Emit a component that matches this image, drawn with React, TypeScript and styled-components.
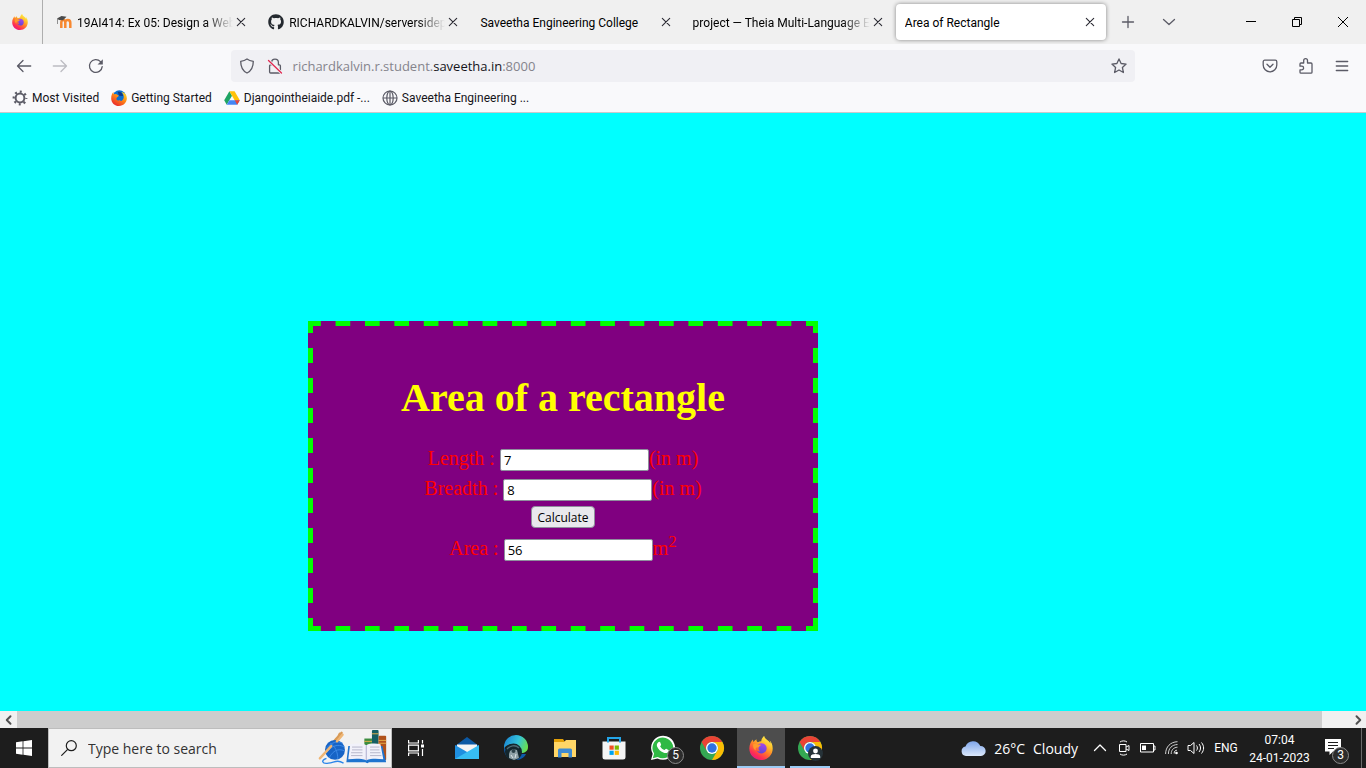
import React from "react";
import styled, { createGlobalStyle } from "styled-components";
import { FaGithub, FaWhatsapp } from "react-icons/fa";

const ui = `"Segoe UI", "Open Sans", "Noto Sans", sans-serif`;
const compact = `Roboto, "Open Sans", sans-serif`;

const GlobalStyle = createGlobalStyle`
  *, *::before, *::after { box-sizing: border-box; }
  body { margin: 0; font-family: ${compact}; font-size: 12px; color: #15141a; }
  button { font: inherit; color: inherit; border: 0; padding: 0; background: none; }
  a { color: inherit; text-decoration: none; }
  svg { display: block; flex: none; }
`;

/* ---------- window and tab strip ---------- */

const Desktop = styled.div`
  display: flex;
  flex-direction: column;
  min-height: 100vh;
`;

const TabStrip = styled.header`
  display: flex;
  align-items: stretch;
  height: 44px;
  background: #f0f0f0;
`;

const PinnedTab = styled.button`
  display: flex;
  align-items: center;
  justify-content: center;
  width: 43px;
  padding-right: 2px;
  border-right: 1px solid #aeaeae;
`;

const Tabs = styled.div`
  display: flex;
  flex: 0 1 1061px;
  min-width: 0;
  margin-left: 3px;
`;

const Tab = styled.div<{ $active?: boolean }>`
  display: flex;
  flex: 1 1 0;
  min-width: 0;
  align-items: center;
  margin: 4px 1px;
  padding: 0 4px 0 9px;
  border-radius: 4px;
  background: ${(p) => (p.$active ? "#fff" : "transparent")};
  box-shadow: ${(p) => (p.$active ? "0 0 4px rgba(0, 0, 0, 0.45)" : "none")};
`;

const TabIcon = styled.span`
  width: 16px;
  margin-right: 5px;
`;

const TabTitle = styled.button<{ $fade?: boolean }>`
  flex: 1;
  min-width: 0;
  overflow: hidden;
  padding-top: 2px;
  text-align: left;
  white-space: nowrap;
  line-height: 20px;
  color: #000;
  mask-image: ${(p) => (p.$fade ? "linear-gradient(to left, transparent, #000 28px)" : "none")};
`;

const TabClose = styled.button`
  display: flex;
  align-items: center;
  justify-content: center;
  width: 24px;
  height: 24px;
  margin-left: -4px;
`;

const StripButton = styled.button`
  display: flex;
  align-items: center;
  justify-content: center;
  width: 41px;
`;

const WindowButtons = styled.div`
  display: flex;
  margin-left: auto;
`;

const WindowButton = styled.button`
  display: flex;
  align-items: center;
  justify-content: center;
  width: 46px;
`;

/* ---------- navigation and bookmarks ---------- */

const NavBar = styled.nav`
  display: flex;
  align-items: center;
  height: 40px;
  padding: 4px 6px 0;
  background: #f9f9fb;
`;

const ToolButton = styled.button`
  display: flex;
  align-items: center;
  justify-content: center;
  width: 36px;
  height: 32px;
`;

const Spring = styled.div`
  flex: 117 1 0;
`;

const UrlBar = styled.div`
  display: flex;
  flex: 904 1 0;
  align-items: center;
  height: 32px;
  padding: 0 2px;
  border-radius: 4px;
  background: #f0f0f4;
`;

const UrlButton = styled.button`
  display: flex;
  align-items: center;
  justify-content: center;
  width: 28px;
  height: 28px;
`;

const Url = styled.div`
  flex: 1;
  padding-left: 4px;
  font-family: ${ui};
  font-size: 13px;
  line-height: 20px;
  white-space: nowrap;
  color: #85848c;
`;

const Host = styled.span`
  color: #15141a;
`;

const Bookmarks = styled.div`
  display: flex;
  align-items: center;
  gap: 12px;
  height: 29px;
  padding: 0 12px;
  background: #f9f9fb;
  border-bottom: 1px solid #c9c9cc;
`;

const Bookmark = styled.a`
  display: flex;
  align-items: center;
  gap: 4px;
  line-height: 20px;
  white-space: nowrap;
`;

/* ---------- web page ---------- */

const Page = styled.main`
  flex: 1;
  padding: 208px 0 80px 308px;
  background: cyan;
`;

const dashX = "linear-gradient(90deg, lime 25%, transparent 25% 75%, lime 75%)";
const dashY = "linear-gradient(lime 25%, transparent 25% 75%, lime 75%)";

const Box = styled.form`
  width: 510px;
  height: 310px;
  padding-top: 49px;
  border: 5px solid transparent;
  background-color: purple;
  background-image: ${dashX}, ${dashX}, ${dashY}, ${dashY};
  background-size: 29px 5px, 29px 5px, 5px 30px, 5px 30px;
  background-position: 0 -5px, 0 calc(100% + 5px), -5px 0, calc(100% + 5px) 0;
  background-repeat: round no-repeat, round no-repeat, no-repeat round, no-repeat round;
  background-origin: padding-box;
  background-clip: border-box;
  font-family: "Liberation Serif", "Times New Roman", serif;
  font-size: 20px;
  color: red;
`;

const Title = styled.h1`
  margin: 0 0 24px;
  font-size: 40px;
  line-height: 46px;
  text-align: center;
  color: yellow;
`;

const Row = styled.div`
  display: flex;
  align-items: baseline;
  justify-content: center;
  height: 30px;
  line-height: 26px;
  white-space: pre;
`;

const Field = styled.input`
  width: 149px;
  height: 22px;
  padding: 1px 3px;
  border: 1px solid #8f8f9d;
  border-radius: 2px;
  background: #fff;
  font-family: ${ui};
  font-size: 13px;
  color: #000;
`;

const Calculate = styled.button`
  height: 22px;
  padding: 1px 5px 0;
  border: 1px solid #8f8f9d;
  border-radius: 4px;
  background: #e9e9ed;
  font-family: ${ui};
  font-size: 12px;
  line-height: 20px;
  color: #000;
`;

const ButtonRow = styled(Row)`
  align-items: flex-start;
  padding-top: 1px;
`;

const Sup = styled.sup`
  font-size: 17px;
  line-height: 0;
`;

const ScrollBar = styled.div`
  display: flex;
  height: 17px;
  background: #f0f0f0;
`;

const ScrollButton = styled.button`
  display: flex;
  align-items: center;
  justify-content: center;
  width: 17px;
`;

const ScrollTrack = styled.div`
  flex: 1;
`;

const ScrollThumb = styled.div`
  width: 98%;
  height: 17px;
  background: #cdcdcd;
`;

/* ---------- taskbar ---------- */

const TaskBar = styled.footer`
  display: flex;
  height: 40px;
  background: #1d1d1d;
  color: #fff;
`;

const StartButton = styled.button`
  display: flex;
  align-items: center;
  justify-content: center;
  width: 48px;
`;

const Search = styled.label`
  display: flex;
  align-items: center;
  width: 344px;
  padding: 0 2px 0 12px;
  border: 1px solid #bdbdbd;
  background: #f2f2f2;
`;

const SearchInput = styled.input`
  flex: 1;
  min-width: 0;
  padding: 0 0 0 11px;
  border: 0;
  outline: 0;
  background: none;
  font-family: ${ui};
  font-size: 14px;
  color: #333;
  &::placeholder { color: #333; opacity: 1; }
`;

const Apps = styled.div`
  display: flex;
  gap: 1px;
  margin-left: 3px;
`;

const AppButton = styled.button<{ $active?: boolean; $open?: boolean }>`
  position: relative;
  display: flex;
  align-items: center;
  justify-content: center;
  width: 48px;
  background: ${(p) => (p.$active ? "#4d4d4d" : "transparent")};
  &::after {
    content: "";
    display: ${(p) => (p.$active || p.$open ? "block" : "none")};
    position: absolute;
    bottom: 0;
    left: ${(p) => (p.$active ? "0" : "4px")};
    right: ${(p) => (p.$active ? "0" : "4px")};
    height: 2px;
    background: #9ccbf5;
  }
`;

const Badge = styled.span<{ $right: number }>`
  position: absolute;
  right: ${(p) => p.$right}px;
  bottom: 4px;
  width: 17px;
  height: 17px;
  border: 1px solid #8a8a8a;
  border-radius: 50%;
  background: #2c2c2c;
  font-size: 12px;
  line-height: 15px;
  text-align: center;
  color: #fff;
`;

const Tray = styled.div`
  display: flex;
  margin-left: auto;
`;

const Weather = styled.button`
  display: flex;
  align-items: center;
  gap: 8px;
  margin-right: 10px;
  font-family: ${ui};
  font-size: 14px;
  white-space: nowrap;
`;

const TrayButton = styled.button`
  display: flex;
  align-items: center;
  justify-content: center;
  width: 24px;
`;

const Language = styled.button`
  width: 36px;
`;

const Clock = styled.button`
  width: 71px;
  padding-top: 2px;
  line-height: 18px;
  text-align: center;
`;

const Notifications = styled.button`
  position: relative;
  width: 46px;
  padding: 0 0 2px 10px;
`;

const ShowDesktop = styled.button`
  width: 5px;
  border-left: 1px solid #6a6a6a;
`;

/* ---------- icons ---------- */

const Line = ({ d, size = 16, color = "#5b5b66", w = 1.3 }: { d: string; size?: number; color?: string; w?: number }) => (
  <svg width={size} height={size} viewBox="0 0 16 16" fill="none" stroke={color} strokeWidth={w} strokeLinecap="round" strokeLinejoin="round">
    <path d={d} />
  </svg>
);

const Cross = () => <Line d="M4.3 4.3l7.4 7.4M11.7 4.3l-7.4 7.4" color="#2b2a33" w={1.1} />;

const Firefox = ({ size = 16, id }: { size?: number; id: string }) => (
  <svg width={size} height={size} viewBox="0 0 24 24">
    <defs>
      <linearGradient id={`${id}a`} x1="0.85" y1="0.05" x2="0.25" y2="1">
        <stop offset="0" stopColor="#fff44f" />
        <stop offset="0.3" stopColor="#ffc02a" />
        <stop offset="0.55" stopColor="#ff7a2a" />
        <stop offset="0.8" stopColor="#ff2f52" />
        <stop offset="1" stopColor="#e31587" />
      </linearGradient>
      <linearGradient id={`${id}b`} x1="0.6" y1="0" x2="0.3" y2="1">
        <stop offset="0" stopColor="#a648e8" />
        <stop offset="1" stopColor="#5b45d6" />
      </linearGradient>
    </defs>
    <path fill={`url(#${id}a)`} d="M15.2 0c-2.2 1.4-2.9 3.5-2.9 5.2-1.2 0-2.4.3-3.4 1C7.5 5.6 7.3 4.200 7.600 3.200 6.200 3.900 5.200 4.900 4.500 5.900 4 5.300 4 3.900 4 3.500 2.200 5.100.300 8.500.300 12.600.300 19 5.500 24 12 24s11.700-5 11.700-11.600c0-3.600-1.400-6.600-3.200-8.100.7 1.200.9 2.300.9 3.100C19.700 4 16 3.600 15.200 0z" />
    <path fill={`url(#${id}b)`} d="M12 7.200c-2.600.2-4.500 2.200-4.700 4.300.7-.5 1.700-.5 2.400-.1-.6 1.700.3 3.300 1.900 3.900-1.400.3-2.700 0-3.700-.9.900 1.900 2.600 3 4.600 3 3 0 5.200-2.300 5.200-5.100 0-2.900-2.300-5.300-5.700-5.100z" />
    <path fill="#ff9b2b" d="M4.200 8.200c1.800-.8 3.500-.6 4.600.2l3.200.4c-.1 1.200-2.100 1.500-2.500 2.600-2.300-.5-3.400.9-2.600 3-2-.7-3.200-3.400-2.700-6.200z" />
  </svg>
);

const OldFirefox = () => (
  <svg width="16" height="16" viewBox="0 0 24 24">
    <defs>
      <linearGradient id="ofa" x1="0.9" y1="0" x2="0.2" y2="1">
        <stop offset="0" stopColor="#ffe226" />
        <stop offset="0.45" stopColor="#ff8a16" />
        <stop offset="1" stopColor="#e8202f" />
      </linearGradient>
    </defs>
    <circle cx="12.500" cy="10.500" r="10" fill="#0b70d1" />
    <path fill="url(#ofa)" d="M3.500 3 4 6.500 7.600 6l4.400 2.700-3.500 2.800c-1.500 3.500 1.500 5 5.500 3.500-1.500 3 6 1.500 5-6-.5-3.200-2.200-5-3.500-6 5.500.5 8.300 5 8.300 9.500C23.800 19 18.500 24 12 24S.300 19 .300 12.600C.300 8 1.500 5.500 3.500 3z" />
    <path fill="#123a86" d="M10 2.500c4.500-.500 8 2.500 8 6.500l-6-.5z" />
  </svg>
);

const Moodle = () => (
  <svg width="17" height="16" viewBox="0 0 17 16">
    <path fill="none" stroke="#f7882f" strokeWidth="2.500" d="M5.300 14V8.500c0-3.500 4-3.500 4 0V14M9.300 14V8.500c0-3.500 5-3.500 5 .2V14" />
    <path fill="#4a4a4a" d="M1 4.500 5.500 2l5 .7L7 6.200 3 6z" />
    <path stroke="#8f8f8f" fill="none" d="M1.500 5v5" />
  </svg>
);

const Drive = () => (
  <svg width="16" height="16" viewBox="0 0 16 16">
    <path fill="#1fa463" d="M5.400 1.200 8 5.700 2.700 14.800.2 10.300z" />
    <path fill="#ffc107" d="M5.400 1.200h5.200l5.200 9.100h-5.200z" />
    <path fill="#4285f4" d="M5.300 10.300h10.500l-2.600 4.500H2.700z" />
    <path fill="#ea4335" d="M10.700 10.300h5.100l-2.600 4.500z" />
  </svg>
);

const Gear = () => (
  <svg width="16" height="16" viewBox="0 0 16 16" fill="none" stroke="#5b5b66">
    <circle cx="8" cy="8" r="4.400" strokeWidth="2" />
    <circle cx="8" cy="8" r="6.300" strokeWidth="2.200" strokeDasharray="2 2.948" strokeDashoffset="1" />
  </svg>
);

const Globe = () => (
  <svg width="16" height="16" viewBox="0 0 16 16" fill="none" stroke="#5b5b66" strokeWidth="1.200">
    <circle cx="8" cy="8" r="7" />
    <ellipse cx="8" cy="8" rx="3.200" ry="7" />
    <path d="M1 8h14M8 1v14" />
  </svg>
);

const Reload = () => (
  <svg width="16" height="16" viewBox="0 0 16 16" fill="none" stroke="#5b5b66" strokeWidth="1.300" strokeLinecap="round">
    <path d="M14.200 8.600A6.400 6.400 0 1 1 12.500 3.600" />
    <path d="M14.800 1.200v5.200H9.600z" fill="#5b5b66" stroke="none" />
  </svg>
);

const LockOff = () => (
  <svg width="16" height="16" viewBox="0 0 16 16" fill="none" stroke="#5b5b66" strokeWidth="1.300" strokeLinecap="round" strokeLinejoin="round">
    <path d="M4.600 6.800V4.500a3.400 3.400 0 0 1 6.800 0v2.300h1a1 1 0 0 1 1 1V14a1 1 0 0 1-1 1H3.600a1 1 0 0 1-1-1V7.800a1 1 0 0 1 1-1z" />
    <path d="M1.500 2.500l13 12.500" stroke="#f0f0f4" strokeWidth="3" />
    <path d="M1.500 2.500l13 12.500" stroke="#e22850" />
  </svg>
);

const Chrome = ({ person }: { person?: boolean }) => (
  <svg width="26" height="26" viewBox="0 0 26 26">
    <circle cx="13" cy="13" r="12" fill="#34a853" />
    <path fill="#ea4335" d="M2.600 7a12 12 0 0 1 20.800 0H13a6 6 0 0 0-5.200 9z" />
    <path fill="#fbbc04" d="M23.400 7A12 12 0 0 1 13 25l5.200-9A6 6 0 0 0 13 7z" />
    <circle cx="13" cy="13" r="6" fill="#fff" />
    <circle cx="13" cy="13" r="4.700" fill="#2f72e2" />
    {person && (
      <g>
        <circle cx="18.500" cy="18.500" r="7.500" fill="#263238" />
        <circle cx="18.500" cy="16" r="2.400" fill="#fff" />
        <path fill="#fff" d="M13.800 23v-1.500c0-3.200 9.400-3.200 9.400 0V23z" />
      </g>
    )}
  </svg>
);

const Windows = () => (
  <svg width="16" height="16" viewBox="0 0 16 16" fill="#fff">
    <path d="M0 2.200 6.600 1.300v6.300H0zM7.400 1.200 16 0v7.600H7.400zM0 8.400h6.600v6.300L0 13.800zM7.400 8.400H16V16l-8.600-1.200z" />
  </svg>
);

const SearchArt = () => (
  <svg width="72" height="36" viewBox="0 0 72 38">
    <path d="M8 21 24 3M12 24 22 4" stroke="#d99a55" strokeWidth="2.500" strokeLinecap="round" />
    <circle cx="17" cy="21" r="10.500" fill="#1764c6" />
    <path d="M8 19c6-6 11-8 17-5M8 24c5-7 12-10 19-6M11 29c4-7 9-10 16-7M12 14c5 3 8 9 8 17" stroke="#3d8be8" fill="none" />
    <path d="M1 30 13 17M19 12 25 5" stroke="#efb675" strokeWidth="2.500" strokeLinecap="round" />
    <path d="M8 30c-6 2-5 6 2 5s9-4 16 0" stroke="#2b86ea" strokeWidth="1.500" fill="none" />
    <rect x="48" y="9" width="8" height="18" fill="#3c8d40" />
    <rect x="56" y="0" width="7" height="27" rx="1" fill="#155e63" />
    <rect x="63" y="6" width="8" height="26" rx="1" fill="#b0521c" />
    <path d="M48 12h8M56 4h7M63 11h8M63 14h8" stroke="#e8b04a" />
    <path d="M31 17h36l4 17H53l-2 1-2-1H29z" fill="#1f74cf" />
    <path d="M33 15c6-1 13-1 17 1 4-2 10-2 15-1l3 16c-7-1-13-1-18 1-5-2-12-2-19-1z" fill="#f1f1fa" />
    <path d="M50 16v16" stroke="#a9a9cc" />
    <path d="M35 18h11M35 21h11M34 24h12M34 27h12M54 18h10M54 21h10M54 24h11M54 27h12" stroke="#b4b4c8" />
  </svg>
);

const TaskView = () => (
  <svg width="18" height="16" viewBox="0 0 18 16" fill="none" stroke="#fff" strokeWidth="1.200">
    <path d="M1.600 0v3h9.800V0M1.600 16v-3h9.800v3M1.600 5.100h9.800v5.800H1.600zM15.500 0v3.500M15.500 9v7" />
    <path d="M14 4.500h3v3h-3z" fill="#fff" stroke="none" />
  </svg>
);

const Mail = () => (
  <svg width="24" height="24" viewBox="0 0 24 24">
    <path fill="#0c59a4" d="M0 10 12 1l12 9v5H0z" />
    <path fill="#f4f4f4" d="M2 8.500h20v7L12 19 2 15z" />
    <path fill="#1f8fe0" d="M0 9l13 7.500V23H0z" />
    <path fill="#37bdf3" d="M24 9 0 23h24z" />
  </svg>
);

const Edge = () => (
  <svg width="26" height="26" viewBox="0 0 26 26">
    <defs>
      <linearGradient id="edg" x1="0" y1="0.300" x2="1" y2="0.600">
        <stop offset="0" stopColor="#1b87d4" />
        <stop offset="0.550" stopColor="#34c3da" />
        <stop offset="1" stopColor="#6ae04a" />
      </linearGradient>
    </defs>
    <path fill="#0d5aab" d="M1 13c0 8 5 12 11 12 5 0 9-2 11-6H9z" />
    <path fill="url(#edg)" d="M1 12A12 12 0 0 1 25 12c0 4-3 6-7 6-3 0-4-1-3-3 1-3-2-6-6-6-4 0-7 2-8 5z" />
    <circle cx="10.500" cy="17" r="8.500" fill="#14262d" />
    <path d="M4 14c3-3 8-5 12-1" stroke="#4e6a74" strokeWidth="1.500" fill="none" />
    <path fill="#8fa0a6" d="M7 16l3-2 4 1 1 4 1 4-5 2-5-2 0-4z" />
    <circle cx="10.500" cy="16" r="2" fill="#2c4048" />
    <path stroke="#dfe6e8" d="M8 20l2 3M13 19l-1 4" />
  </svg>
);

const Folder = () => (
  <svg width="24" height="22" viewBox="0 0 24 22">
    <path fill="#e3a008" d="M1 2h9l2 3H1z" />
    <path fill="#ffd667" d="M1 5h10l2-2h10v17H1z" />
    <path fill="#3f8bd2" d="M5 13a1.500 1.500 0 0 1 1.500-1.500h11A1.500 1.500 0 0 1 19 13v7.500h-3.500V16h-7v4.500H5z" />
  </svg>
);

const Store = () => (
  <svg width="24" height="24" viewBox="0 0 24 24">
    <path fill="#f5f5f5" d="M.5 5.500h23V21a2.500 2.500 0 0 1-2.500 2.500H3A2.500 2.500 0 0 1 .5 21z" />
    <path d="M6 6.500V2h12v4.500" fill="none" stroke="#24a5e8" strokeWidth="2" />
    <path fill="#f25022" d="M7.500 9.500h4.200v4.200H7.500z" />
    <path fill="#7fba00" d="M12.700 9.500h4.200v4.200h-4.200z" />
    <path fill="#00a4ef" d="M7.500 14.700h4.200v4.200H7.500z" />
    <path fill="#ffb900" d="M12.700 14.700h4.200v4.200h-4.200z" />
  </svg>
);

const WhatsApp = () => (
  <svg width="26" height="26" viewBox="0 0 26 26">
    <path fill="#fff" d="M1 25l1.700-6.200A12 12 0 1 1 7.500 23.400z" />
    <path fill="#2fb944" d="M2.800 23.300l1.300-4.700A10.400 10.400 0 1 1 7.700 22z" />
    <path fill="#fff" d="M8.300 7.200c.5-.6 1.500-.7 1.900.1l.9 2.100c.2.500-.7 1.400-1 1.800 1.100 2 2.500 3.100 4.500 3.900.5-.4 1-1.500 1.600-1.300l2.200 1.100c.6.300.2 1.500-.1 2-1.100 1.400-3 1.500-5 .7-2.800-1.100-5-3.300-6.100-5.800-.7-1.800-.3-3.500 1.100-4.600z" />
  </svg>
);

const Cloud = () => (
  <svg width="25" height="18" viewBox="0 0 25 18">
    <defs>
      <linearGradient id="cld" x1="0" y1="0" x2="0" y2="1">
        <stop offset="0" stopColor="#7fa6ea" />
        <stop offset="1" stopColor="#dbe8fb" />
      </linearGradient>
    </defs>
    <path fill="url(#cld)" d="M5 17a4.800 4.800 0 0 1-.5-9.500A8 8 0 0 1 19.300 7 5 5 0 0 1 20 17z" />
  </svg>
);

const Camera = () => (
  <svg width="12" height="16" viewBox="0 0 12 16" fill="none" stroke="#fff">
    <path d="M1.500 4.500h6.500v7H1.500zM8 7l3-1.500v5L8 9M2 2c2-1.500 5-1.500 7 0M2 14c2 1.500 5 1.500 7 0" />
  </svg>
);

const Battery = () => (
  <svg width="16" height="10" viewBox="0 0 16 10" fill="none" stroke="#fff">
    <path d="M.5.500h13v8.500H.5zM13.500 3h1.500v4h-1.500" />
    <path d="M2 2.500h4v4.500H2z" fill="#fff" stroke="none" />
  </svg>
);

const Wifi = () => (
  <svg width="14" height="14" viewBox="0 0 14 14" fill="none" stroke="#fff" strokeWidth="1">
    <path d="M9.200 12.500c0-1.800.6-3 2.600-3.300" />
    <path d="M6.200 13c0-4 2.300-6.600 6.300-6.800M3.400 13c0-5.700 3.600-9.300 9.100-9.500M.6 13C.6 5.800 5.500.9 12.500.7" stroke="#d0d0d0" />
    <circle cx="11.500" cy="12" r="1.300" fill="#fff" stroke="none" />
  </svg>
);

const Speaker = () => (
  <svg width="18" height="14" viewBox="0 0 18 14" fill="none" stroke="#fff">
    <path d="M1 4.500h2.500L7 1.500v11L3.500 9.500H1zM9.500 4.500c1.200 1.500 1.200 3.500 0 5M12 3c2 2.500 2 5.500 0 8M14.500 1.500c2.800 3.500 2.800 7.500 0 11" />
  </svg>
);

const tabs = [
  { title: "19AI414: Ex 05: Design a Webs", icon: <Moodle />, fade: true },
  { title: "RICHARDKALVIN/serversidepr", icon: <FaGithub size={16} color="#24292f" />, fade: true },
  { title: "Saveetha Engineering College" },
  { title: "project — Theia Multi-Language E", fade: true },
  { title: "Area of Rectangle", active: true },
];

export default function App() {
  return (
    <Desktop>
      <GlobalStyle />
      <TabStrip>
        <PinnedTab aria-label="Pinned tab"><Firefox id="pin" /></PinnedTab>
        <Tabs>
          {tabs.map((t) => (
            <Tab key={t.title} $active={t.active}>
              {t.icon && <TabIcon>{t.icon}</TabIcon>}
              <TabTitle $fade={t.fade}>{t.title}</TabTitle>
              <TabClose aria-label="Close tab"><Cross /></TabClose>
            </Tab>
          ))}
        </Tabs>
        <StripButton aria-label="New tab"><Line d="M8 2.500v11M2.500 8h11" /></StripButton>
        <StripButton aria-label="List all tabs"><Line d="M2.500 5.500 8 10.500l5.500-5" /></StripButton>
        <WindowButtons>
          <WindowButton aria-label="Minimize">
            <svg width="10" height="10" viewBox="0 0 10 10"><path d="M0 4.500h10" stroke="#000" /></svg>
          </WindowButton>
          <WindowButton aria-label="Restore">
            <svg width="10" height="10" viewBox="0 0 10 10" fill="none" stroke="#000"><path d="M.5 2.500h7v7h-7zM2.500 2.500v-2h7v7h-2" /></svg>
          </WindowButton>
          <WindowButton aria-label="Close">
            <svg width="10" height="10" viewBox="0 0 10 10" stroke="#000"><path d="M0 0l10 10M10 0 0 10" /></svg>
          </WindowButton>
        </WindowButtons>
      </TabStrip>

      <NavBar>
        <ToolButton aria-label="Back"><Line d="M14.700 8H1.500M7 2.500 1.500 8 7 13.500" /></ToolButton>
        <ToolButton aria-label="Forward"><Line d="M1.300 8h13.200M9 2.500 14.500 8 9 13.500" color="#bcbcc2" /></ToolButton>
        <ToolButton aria-label="Reload"><Reload /></ToolButton>
        <Spring />
        <UrlBar>
          <UrlButton aria-label="Tracking protection"><Line d="M8 1c2 1.500 4 2 6.300 2.300 0 5.200-.8 9.200-6.300 11.700C2.500 12.500 1.700 8.500 1.700 3.300 4 3 6 2.500 8 1z" /></UrlButton>
          <UrlButton aria-label="Connection not secure"><LockOff /></UrlButton>
          <Url>richardkalvin.r.student.<Host>saveetha.in</Host>:8000</Url>
          <UrlButton aria-label="Bookmark this page"><Line d="M8 .9l2.100 4.600 5 .6-3.700 3.400 1 5L8 12l-4.400 2.500 1-5L.9 6.100l5-.6z" /></UrlButton>
        </UrlBar>
        <Spring />
        <ToolButton aria-label="Save to Pocket"><Line d="M2.700 2.200h10.600a1.500 1.500 0 0 1 1.500 1.500V7a6.800 6.800 0 0 1-13.600 0V3.700a1.500 1.500 0 0 1 1.500-1.500zM5 6.300l3 2.900 3-2.900" /></ToolButton>
        <ToolButton aria-label="Extensions"><Line d="M2 8.200V6a1 1 0 0 1 1-1h2.700V2.600a1.900 1.900 0 0 1 3.800 0V5H13a1 1 0 0 1 1 1v8.200a1 1 0 0 1-1 1H3a1 1 0 0 1-1-1v-2.400h1.800a1.800 1.800 0 0 0 0-3.600z" /></ToolButton>
        <ToolButton aria-label="Menu"><Line d="M2.300 3.500h11.400M2.300 8h11.400M2.300 12.500h11.400" /></ToolButton>
      </NavBar>

      <Bookmarks>
        <Bookmark href="#most-visited"><Gear />Most Visited</Bookmark>
        <Bookmark href="#getting-started"><OldFirefox />Getting Started</Bookmark>
        <Bookmark href="#drive"><Drive />Djangointheiaide.pdf -...</Bookmark>
        <Bookmark href="#saveetha"><Globe />Saveetha Engineering ...</Bookmark>
      </Bookmarks>

      <Page>
        <Box onSubmit={(e) => e.preventDefault()}>
          <Title>Area of a rectangle</Title>
          <Row><label htmlFor="length">{"Length : "}</label><Field id="length" defaultValue="7" />(in m)</Row>
          <Row><label htmlFor="breadth">{"Breadth : "}</label><Field id="breadth" defaultValue="8" />(in m)</Row>
          <ButtonRow><Calculate type="submit">Calculate</Calculate></ButtonRow>
          <Row><label htmlFor="area">{"Area : "}</label><Field id="area" defaultValue="56" /><span>m<Sup>2</Sup></span></Row>
        </Box>
      </Page>
      <ScrollBar>
        <ScrollButton aria-label="Scroll left"><Line size={12} d="M10 3 5 8l5 5" color="#505050" w={2.6} /></ScrollButton>
        <ScrollTrack><ScrollThumb /></ScrollTrack>
        <ScrollButton aria-label="Scroll right"><Line size={12} d="M6 3l5 5-5 5" color="#505050" w={2.6} /></ScrollButton>
      </ScrollBar>

      <TaskBar>
        <StartButton aria-label="Start"><Windows /></StartButton>
        <Search>
          <svg width="16" height="16" viewBox="0 0 16 16" fill="none" stroke="#1d1d1d" strokeWidth="1.200">
            <circle cx="10.300" cy="5.700" r="5" /><path d="M6.700 9.300.3 15.700" />
          </svg>
          <SearchInput aria-label="Search" placeholder="Type here to search" />
          <SearchArt />
        </Search>
        <StartButton aria-label="Task view"><TaskView /></StartButton>
        <Apps>
          <AppButton aria-label="Mail"><Mail /></AppButton>
          <AppButton aria-label="Edge"><Edge /></AppButton>
          <AppButton aria-label="File Explorer"><Folder /></AppButton>
          <AppButton aria-label="Microsoft Store"><Store /></AppButton>
          <AppButton aria-label="WhatsApp"><WhatsApp /><Badge $right={3}>5</Badge></AppButton>
          <AppButton aria-label="Chrome"><Chrome /></AppButton>
          <AppButton aria-label="Firefox" $active><Firefox size={24} id="task" /></AppButton>
          <AppButton aria-label="Chrome profile" $open><Chrome person /></AppButton>
        </Apps>
        <Tray>
          <Weather><Cloud /><span>26°C</span><span>Cloudy</span></Weather>
          <TrayButton aria-label="Show hidden icons"><Line d="M2.500 10.500 8 5l5.500 5.500" color="#fff" /></TrayButton>
          <TrayButton aria-label="Meet now"><Camera /></TrayButton>
          <TrayButton aria-label="Battery"><Battery /></TrayButton>
          <TrayButton aria-label="Network"><Wifi /></TrayButton>
          <TrayButton aria-label="Volume"><Speaker /></TrayButton>
          <Language>ENG</Language>
          <Clock>07:04<br />24-01-2023</Clock>
          <Notifications aria-label="Notifications">
            <svg width="16" height="16" viewBox="0 0 16 16">
              <path fill="#fff" d="M0 0h16v12.500H8L4.500 16v-3.500H0z" />
              <path d="M3 3.500h10M3 6.500h10M3 9.500h6" stroke="#1d1d1d" />
            </svg>
            <Badge $right={12}>3</Badge>
          </Notifications>
          <ShowDesktop aria-label="Show desktop" />
        </Tray>
      </TaskBar>
    </Desktop>
  );
}
